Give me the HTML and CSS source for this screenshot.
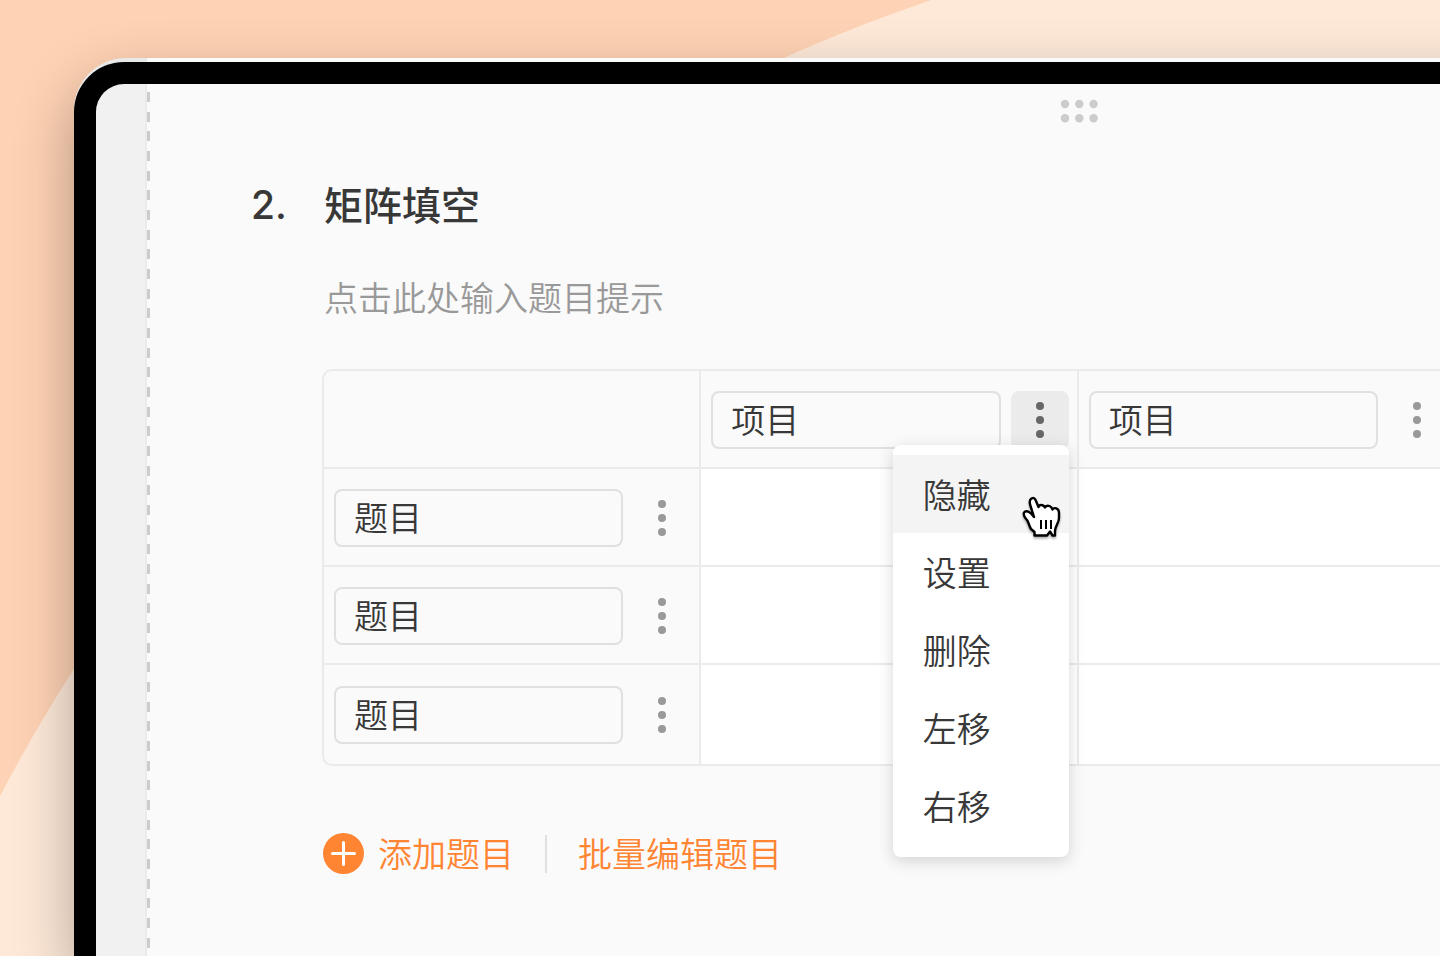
FILE: index.html
```html
<!DOCTYPE html>
<html lang="zh-CN">
<head>
<meta charset="utf-8">
<title>矩阵填空</title>
<link rel="stylesheet" href="styles.css">
</head>
<body>
<div class="stage">
  <div class="shell">
    <div class="bezel">
      <aside class="gutter"></aside>
      <main class="panel">
        <button class="handle" type="button" aria-label="拖动排序">
          <svg width="38" height="24" viewBox="0 0 38 24" fill="#ccc"><circle cx="5" cy="5" r="4.200"/><circle cx="19.300" cy="5" r="4.200"/><circle cx="33.600" cy="5" r="4.200"/><circle cx="5" cy="19.300" r="4.200"/><circle cx="19.300" cy="19.300" r="4.200"/><circle cx="33.600" cy="19.300" r="4.200"/></svg>
        </button>
        <section class="question">
          <span class="number">2.</span>
          <div class="body">
            <h1 class="title">矩阵填空</h1>
            <p class="hint">点击此处输入题目提示</p>
            <table class="matrix">
              <thead>
                <tr>
                  <td class="cell"></td>
                  <th class="cell" scope="col">
                    <div class="field">
                      <input class="input" type="text" value="项目" aria-label="第一列">
                      <div class="anchor">
                        <button class="more active" type="button" aria-label="更多操作"><i class="dot"></i><i class="dot"></i><i class="dot"></i></button>
                        <div class="menu">
                          <button class="item hover" type="button">隐藏</button>
                          <button class="item" type="button">设置</button>
                          <button class="item" type="button">删除</button>
                          <button class="item" type="button">左移</button>
                          <button class="item" type="button">右移</button>
                          <svg class="cursor" width="40" height="44" viewBox="0 0 40 44">
                            <path d="M10.500 3.500C8 5 8.500 8 9.500 11L13 22C10 18 6 14.500 3.500 17C1 20 4 22.500 6 25C8 28 8 31 10 34L13.500 37V40.500H26L29 36.500L31.500 40.500H34V36C34 31 38 28 38 23V18C38 13 33 12 31.500 14.500C30 10 25.500 10 24 12.500C22 9 18 9.500 17.500 12L15 6C14 3 12.500 2.500 10.500 3.500Z" fill="#fff" stroke="#000" stroke-width="2.400" stroke-linejoin="round"/>
                            <path d="M20 25V34M25 25V34M30 25V34" stroke="#000" stroke-width="2"/>
                          </svg>
                        </div>
                      </div>
                    </div>
                  </th>
                  <th class="cell" scope="col">
                    <div class="field">
                      <input class="input" type="text" value="项目" aria-label="第二列">
                      <button class="more" type="button" aria-label="更多操作"><i class="dot"></i><i class="dot"></i><i class="dot"></i></button>
                    </div>
                  </th>
                </tr>
              </thead>
              <tbody>
                <tr>
                  <th class="cell" scope="row"><div class="field"><input class="input" type="text" value="题目" aria-label="第一行"><button class="more" type="button" aria-label="更多操作"><i class="dot"></i><i class="dot"></i><i class="dot"></i></button></div></th>
                  <td class="cell blank"></td><td class="cell blank"></td>
                </tr>
                <tr>
                  <th class="cell" scope="row"><div class="field"><input class="input" type="text" value="题目" aria-label="第二行"><button class="more" type="button" aria-label="更多操作"><i class="dot"></i><i class="dot"></i><i class="dot"></i></button></div></th>
                  <td class="cell blank"></td><td class="cell blank"></td>
                </tr>
                <tr>
                  <th class="cell" scope="row"><div class="field"><input class="input" type="text" value="题目" aria-label="第三行"><button class="more" type="button" aria-label="更多操作"><i class="dot"></i><i class="dot"></i><i class="dot"></i></button></div></th>
                  <td class="cell blank"></td><td class="cell blank"></td>
                </tr>
              </tbody>
            </table>
            <div class="actions">
              <button class="action" type="button">
                <svg width="42" height="42" viewBox="0 0 42 42"><circle cx="21.500" cy="21.500" r="20.500" fill="#ff8533"/><path d="M21.500 10.500V32.500M10.500 21.500H32.500" stroke="#fff" stroke-width="3" stroke-linecap="round"/></svg>
                添加题目
              </button>
              <span class="divider"></span>
              <button class="action" type="button">批量编辑题目</button>
            </div>
          </div>
        </section>
      </main>
    </div>
  </div>
</div>
</body>
</html>
```
FILE: styles.css
```css
* { box-sizing: border-box; }

body { margin: 0; }

body, button, input {
  font-family: "Noto Sans CJK SC", sans-serif;
  font-size: 34px;
  font-weight: 350;
  color: #383838;
}

button {
  padding: 0;
  border: 0;
  background: none;
}

.stage {
  display: flex;
  min-height: 100vh;
  padding: 58px 0 0 74px;
  overflow: hidden;
  background: radial-gradient(circle at 1458px 1559px, #fee9d8 1645px, #fed2b4 1646px);
}

/* The device runs off the right edge of the stage. */
.shell {
  display: flex;
  flex: 1;
  margin-right: -592px;
  padding-top: 4px;
  border-radius: 52px 52px 0 0;
  background: linear-gradient(90deg, #e8e8e8 73px, #fafafa 73px);
  box-shadow: 0 24px 60px rgba(0, 0, 0, 0.3);
}

.bezel {
  display: flex;
  flex: 1;
  border: 22px solid #000;
  border-bottom: 0;
  border-radius: 50px 50px 0 0;
  background: #000;
}

.gutter {
  width: 51px;
  border-right: 2px solid #ebebeb;
  border-radius: 28px 0 0 0;
  background: #f1f1f1;
}

.panel {
  flex: 1;
  padding: 14px 0 72px;
  border-radius: 0 28px 0 0;
  background:
    repeating-linear-gradient(#ccc 0 10px, #fafafa 10px 20px, #ccc 20px 30px, #fafafa 30px 39px, #ccc 39px 49px, #fafafa 49px 59px) 0 8px / 3px 100% no-repeat,
    #fafafa;
}

.handle {
  display: block;
  height: 26px;
  margin: 0 auto;
  line-height: 0;
}

.question {
  display: flex;
  padding: 50px 0 0 104px;
}

.number {
  width: 71px;
  font-family: Inter, sans-serif;
  font-size: 39px;
  font-weight: 500;
  line-height: 62px;
}

.title {
  margin: 0;
  padding-left: 2px;
  font-size: 39px;
  font-weight: 500;
  line-height: 58px;
}

.hint {
  margin: 40px 0 47px;
  padding-left: 2px;
  line-height: 50px;
  color: #999;
}

.matrix {
  width: 1136px;
  table-layout: fixed;
  border: 2px solid #ebebeb;
  border-spacing: 0;
  border-radius: 10px;
}

.cell {
  height: 98px;
  padding: 20px 8px 18px 10px;
  border-right: 2px solid #ebebeb;
  border-bottom: 2px solid #ebebeb;
}

.cell:last-child {
  padding-right: 10px;
  border-right: 0;
}

tbody tr:last-child > .cell {
  height: 99px;
  padding-bottom: 20px;
  border-bottom: 0;
}

.blank { background: #fff; }

.field {
  display: flex;
  gap: 10px;
}

.input {
  flex: 1;
  min-width: 0;
  height: 58px;
  padding: 0 18px 3px;
  border: 2px solid #e0e0e0;
  border-radius: 8px;
  outline: 0;
  background: transparent;
}

.anchor { position: relative; }

.more {
  display: flex;
  flex-direction: column;
  align-items: center;
  justify-content: center;
  gap: 6px;
  width: 58px;
  height: 58px;
  border-radius: 8px;
  color: #999;
}

.active {
  background: #ebebeb;
  color: #666;
}

.dot {
  width: 8px;
  height: 8px;
  border-radius: 50%;
  background: currentColor;
}

.menu {
  position: absolute;
  top: 54px;
  right: 0;
  width: 176px;
  padding: 10px 0 12px;
  border-radius: 8px;
  background: #fff;
  box-shadow: 0 4px 16px rgba(0, 0, 0, 0.16);
}

.item {
  display: block;
  width: 100%;
  height: 78px;
  padding: 0 30px 2px;
  text-align: left;
}

.hover { background: #f4f4f4; }

.cursor {
  position: absolute;
  top: 50px;
  right: 8px;
  filter: drop-shadow(0 2px 1px rgba(0, 0, 0, 0.3));
}

.actions {
  display: flex;
  align-items: center;
  gap: 31px;
  margin-top: 63px;
}

.action {
  display: flex;
  align-items: center;
  gap: 14px;
  line-height: 48px;
  padding-bottom: 2px;
  color: #ff8533;
}

.divider {
  width: 2px;
  height: 38px;
  background: #e0e0e0;
}
```
